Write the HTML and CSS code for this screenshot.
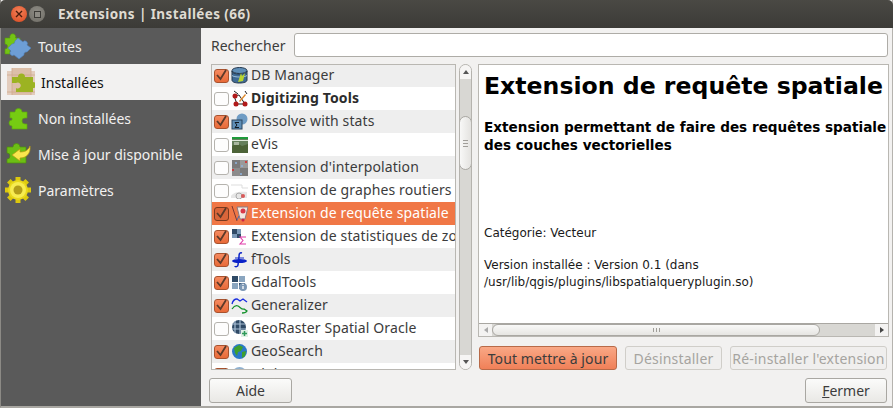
FILE: index.html
```html
<!DOCTYPE html>
<html lang="fr">
<head>
<meta charset="utf-8">
<title>Extensions | Installées (66)</title>
<link rel="stylesheet" href="styles.css">
</head>
<body>
<div class="window">
  <header class="titlebar">
    <span class="wbtn close"><svg viewBox="0 0 8 8" width="8" height="8"><path d="M1 1l6 6M7 1l-6 6" stroke="#4a1c0c" stroke-width="1.4"/></svg></span>
    <span class="wbtn mini"><span class="square"></span></span>
    <span class="wtitle">Extensions | Installées (66)</span>
  </header>
  <div class="body">
    <nav class="sidebar">
      <div class="navitem">
        <svg class="navicon" viewBox="0 0 28 28"><path d="M1 6h5a3 3 0 1 1 5.500 0H16v8H6v8H1v-5a2.500 2.500 0 0 0 0-5z" fill="#74c414" stroke="#559a0c" stroke-width=".6"/><path d="M14 6l5 4a2.500 2.500 0 0 1 4 3l4 3-4 4a2.500 2.500 0 0 0-3 3l-5 4-5-4a2.500 2.500 0 0 1-3-4l-3-3 4-4a3 3 0 0 0 3-3z" fill="#6d9ed6" stroke="#4f80b8" stroke-width=".6"/></svg>
        <span>Toutes</span>
      </div>
      <div class="navitem current">
        <svg class="navicon" viewBox="0 0 28 28"><rect x="0" y="3" width="28" height="24" fill="#e3cdbd"/><rect x="5" y="0" width="19" height="27" fill="#dcbfa9"/><path d="M5 0v27M24 0v27M0 7h28M0 24h28" stroke="#cfa98e" stroke-width=".8" fill="none"/><path d="M5 9h6a3.500 3.500 0 1 1 7 0h8v5a3 3 0 1 1 0 6v4H9v-4a3 3 0 1 0 0-5H5z" fill="#9cb322"/></svg>
        <span>Installées</span>
      </div>
      <div class="navitem">
        <svg class="navicon" viewBox="0 0 28 28"><path d="M6 8h5a3.500 3.500 0 1 1 7 0h5v6h-2a3 3 0 1 0 0 6h2v5H8v-3a3 3 0 1 1 0-6V14H6z" fill="#76cc12" stroke="#5fa80e" stroke-width=".7"/></svg>
        <span>Non installées</span>
      </div>
      <div class="navitem">
        <svg class="navicon" viewBox="0 0 28 28"><path d="M3 7h6a3.500 3.500 0 1 1 7 0h6v16H3v-4a3 3 0 0 0 0-6z" fill="#6cbe14" stroke="#4e8f0c" stroke-width=".7"/><path d="M8 15l8-6v3c4 0 8-1 10-6 1 8-4 12-10 12v3z" fill="#f9e64e" stroke="#b59a12" stroke-width=".7"/></svg>
        <span>Mise à jour disponible</span>
      </div>
      <div class="navitem">
        <svg class="navicon" viewBox="0 0 28 28"><path d="M14 1v26M1 14h26M4.800 4.800l18.400 18.400M23.200 4.800L4.800 23.200" stroke="#dcc80e" stroke-width="5"/><circle cx="14" cy="14" r="10" fill="#e9d81c"/><circle cx="14" cy="14" r="8" fill="#f7ec50"/><circle cx="14" cy="14" r="4.500" fill="#b39e1a"/></svg>
        <span>Paramètres</span>
      </div>
    </nav>
    <main class="main">
      <div class="searchrow">
        <label class="searchlabel">Rechercher</label>
        <div class="searchinput"></div>
      </div>
      <div class="panes">
        <div class="listcol">
          <div class="listbox">
            <div class="row alt"><span class="cb on"><svg viewBox="0 0 13 13"><path d="M2 6l3.500 4L11 1" class="tick"/></svg></span>
              <svg class="ricon" viewBox="0 0 17 17"><ellipse cx="8.500" cy="3.500" rx="7.500" ry="3" fill="#5f8fb8" stroke="#22364d"/><path d="M1 4v9c0 2 3 3 7.500 3s7.500-1 7.500-3V4c0 2-3 3-7.500 3S1 6 1 4z" fill="#3f6b94" stroke="#22364d"/><path d="M1 8.500c2 2 13 2 15 0" fill="none" stroke="#9fc0dc"/><path d="M7 15l3-9 1 3 3-3-2 8z" fill="#b9d52e"/></svg>
              <span class="rtext">DB Manager</span></div>
            <div class="row"><span class="cb"></span>
              <svg class="ricon" viewBox="0 0 17 17"><path d="M3 6l3 8h8L8 5z" fill="none" stroke="#222"/><circle cx="4" cy="6" r="2.500" fill="#b11a1a"/><circle cx="5" cy="14" r="2.500" fill="#b11a1a"/><circle cx="14" cy="14" r="2.500" fill="#b11a1a"/><path d="M8 11l6-7 1 1-6 7z" fill="#e08a2c"/><path d="M3 1l4 3M14 1l2 3" stroke="#222"/></svg>
              <span class="rtext strong">Digitizing Tools</span></div>
            <div class="row alt"><span class="cb on"><svg viewBox="0 0 13 13"><path d="M2 6l3.500 4L11 1" class="tick"/></svg></span>
              <svg class="ricon" viewBox="0 0 17 17"><circle cx="11" cy="6" r="5.500" fill="#6f9cc4"/><rect x="1" y="7" width="10" height="9" fill="#5f8fb8" stroke="#2c465f"/><path d="M8 9.500H4l2 2.500-2 2.500h4" fill="none" stroke="#101820"/></svg>
              <span class="rtext">Dissolve with stats</span></div>
            <div class="row"><span class="cb"></span>
              <svg class="ricon" viewBox="0 0 17 17"><rect x="1" y="2" width="16" height="15" fill="#65805c"/><rect x="1" y="1" width="16" height="2" fill="#1f9a3a"/><rect x="1" y="4" width="16" height="1" fill="#dfe9dc"/><path d="M1 10l5-3 5 3 6-2v9H1z" fill="#4c6338"/><rect x="3" y="6" width="5" height="3" fill="#a9b8a0"/></svg>
              <span class="rtext">eVis</span></div>
            <div class="row alt"><span class="cb"></span>
              <svg class="ricon" viewBox="0 0 17 17"><rect x="1" y="1" width="16" height="16" fill="#7a7a7a"/><rect x="9" y="1" width="8" height="8" fill="#9a9a9a"/><rect x="1" y="9" width="8" height="8" fill="#8c8c8c"/><circle cx="5" cy="4" r="1" fill="#8fb4e0"/><circle cx="15" cy="3" r="1" fill="#d22"/><circle cx="2" cy="11" r="1" fill="#d22"/><circle cx="11" cy="7" r="1" fill="#8fb4e0"/><circle cx="10" cy="15" r="1" fill="#8fb4e0"/></svg>
              <span class="rtext">Extension d'interpolation</span></div>
            <div class="row"><span class="cb"></span>
              <svg class="ricon" viewBox="0 0 17 17"><path d="M0 3h11M11 3v3h6" fill="none" stroke="#ddd"/><path d="M0 14c2-4 9-5 16-4v6H0z" fill="#e6e6e6"/><circle cx="8" cy="14" r="3" fill="none" stroke="#aaa"/><circle cx="12" cy="14" r="2" fill="#d85a5a"/></svg>
              <span class="rtext">Extension de graphes routiers</span></div>
            <div class="row sel"><span class="cb on dark"><svg viewBox="0 0 13 13"><path d="M2 6l3.500 4L11 1" class="tick"/></svg></span>
              <svg class="ricon" viewBox="0 0 17 17"><path d="M1 1l5 15" fill="none" stroke="#7a3a34"/><path d="M6 2h11l-3 12H9z" fill="#f4e6e0" stroke="#8a7a80"/><circle cx="12" cy="6" r="2.500" fill="#d8384a"/><path d="M6 15l2-4" stroke="#4a6ab0"/><circle cx="12" cy="15" r="1.500" fill="#c24"/></svg>
              <span class="rtext">Extension de requête spatiale</span></div>
            <div class="row"><span class="cb on"><svg viewBox="0 0 13 13"><path d="M2 6l3.500 4L11 1" class="tick"/></svg></span>
              <svg class="ricon" viewBox="0 0 17 17"><rect x="1" y="1" width="5" height="5" fill="#2f4a66"/><rect x="6" y="1" width="4" height="5" fill="#7b99b8"/><rect x="1" y="6" width="5" height="4" fill="#7b99b8"/><rect x="6" y="6" width="4" height="4" fill="#2f4a66"/><path d="M15 9H9l3 3.500L9 16h6" fill="none" stroke="#e03aa8" stroke-width="1.100"/></svg>
              <span class="rtext">Extension de statistiques de zone</span></div>
            <div class="row alt"><span class="cb on"><svg viewBox="0 0 13 13"><path d="M2 6l3.500 4L11 1" class="tick"/></svg></span>
              <svg class="ricon" viewBox="0 0 17 17"><path d="M11 2c-3-1-3 2-3 4l-1 8c0 2-3 2-3 1" fill="none" stroke="#0a22c8" stroke-width="1.500"/><ellipse cx="8.500" cy="10" rx="7.500" ry="2" fill="#0a22c8"/><path d="M4 7h9" stroke="#0a22c8"/></svg>
              <span class="rtext">fTools</span></div>
            <div class="row"><span class="cb on"><svg viewBox="0 0 13 13"><path d="M2 6l3.500 4L11 1" class="tick"/></svg></span>
              <svg class="ricon" viewBox="0 0 17 17"><rect x="1" y="2" width="6" height="6" fill="#2f4a66"/><rect x="8" y="2" width="6" height="6" fill="#8aa5bf"/><rect x="1" y="9" width="6" height="6" fill="#8aa5bf"/><rect x="8" y="9" width="6" height="6" fill="#2f4a66"/><circle cx="12" cy="13" r="4" fill="#7c97b4"/><path d="M12 12v3M12 10v1" stroke="#fff" stroke-width="1.300"/></svg>
              <span class="rtext">GdalTools</span></div>
            <div class="row alt"><span class="cb on"><svg viewBox="0 0 13 13"><path d="M2 6l3.500 4L11 1" class="tick"/></svg></span>
              <svg class="ricon" viewBox="0 0 17 17"><path d="M1 7c1-4 3-5 5-5l3 2 3-2 4 3" fill="none" stroke="#1a2ee0" stroke-width="1.300"/><path d="M1 12c2-3 4-4 6-3s4 4 6 3l3 2c-1 2-3 2-5 2" fill="none" stroke="#14922c" stroke-width="1.300"/></svg>
              <span class="rtext">Generalizer</span></div>
            <div class="row"><span class="cb"></span>
              <svg class="ricon" viewBox="0 0 17 17"><circle cx="8" cy="7" r="7" fill="#2f4a66"/><path d="M4 1v12M9 0v14M1 4h13M1 9h14" stroke="#a8bed4" stroke-width="1.200"/><rect x="10" y="10" width="7" height="7" fill="#dff0e4"/><path d="M13.500 11v5M11 13.500h5" stroke="#2f9a5a" stroke-width="1.500"/></svg>
              <span class="rtext">GeoRaster Spatial Oracle</span></div>
            <div class="row alt"><span class="cb on"><svg viewBox="0 0 13 13"><path d="M2 6l3.500 4L11 1" class="tick"/></svg></span>
              <svg class="ricon" viewBox="0 0 17 17"><circle cx="8.500" cy="8.500" r="7.500" fill="#2a78c8"/><path d="M3 5l5-3 4 2-2 4-3 1-1 4-2-3zM11 9l4-1-1 5-3 2z" fill="#3fa02c"/></svg>
              <span class="rtext">GeoSearch</span></div>
            <div class="row"><span class="cb on"><svg viewBox="0 0 13 13"><path d="M2 6l3.500 4L11 1" class="tick"/></svg></span>
              <svg class="ricon" viewBox="0 0 17 17"><circle cx="8.500" cy="8.500" r="7.500" fill="#8fb0cf"/></svg>
              <span class="rtext">Globe</span></div>
          </div>
          <div class="grip vgrip"></div>
          <div class="vscroll">
            <span class="arrow up"></span>
            <div class="vtrack"><div class="vthumb"><i></i><i></i><i></i></div></div>
            <span class="arrow down"></span>
          </div>
        </div>
        <div class="grip vgrip2"></div>
        <div class="detailcol">
          <div class="detail">
            <div class="doc">
              <h1 class="dtitle">Extension de requête spatiale</h1>
              <h3 class="dsub">Extension permettant de faire des requêtes spatiale<br>des couches vectorielles</h3>
              <p class="dcat">Catégorie: Vecteur</p>
              <p class="dver">Version installée : Version 0.1 (dans<br>/usr/lib/qgis/plugins/libspatialqueryplugin.so)</p>
            </div>
            <div class="hscroll">
              <span class="harrow left"></span>
              <div class="htrack"><div class="hthumb"><i></i><i></i><i></i></div></div>
              <span class="harrow right"></span>
            </div>
          </div>
          <div class="actions">
            <button class="btn accent">Tout mettre à jour</button>
            <button class="btn off uninstall">Désinstaller</button>
            <button class="btn off reinstall">Ré-installer l'extension</button>
          </div>
        </div>
      </div>
      <div class="footer">
        <button class="btn foot">Aide</button>
        <button class="btn foot close-btn"><span><u>F</u>ermer</span></button>
      </div>
    </main>
  </div>
</div>
</body>
</html>
```
FILE: styles.css
```css
* { box-sizing: border-box; }
html, body { margin: 0; padding: 0; }
body { width: 893px; height: 408px; overflow: hidden; background: #f2f1f0; font-family: "Noto Sans", sans-serif; font-size: 14px; color: #3c3c3c; }
.window { width: 893px; height: 408px; display: flex; flex-direction: column; border-left: 1px solid #8c8a85; border-right: 1px solid #b5b3ae; border-bottom: 2px solid #a9a7a2; }
.titlebar { height: 28px; margin-left: -1px; margin-right: -1px; flex: none; display: flex; align-items: center; background: linear-gradient(#4a4944, #3c3b37); border-radius: 5px 5px 0 0; padding-left: 11px; }
.wbtn { width: 16px; height: 16px; border-radius: 50%; display: flex; align-items: center; justify-content: center; }
.close { background: radial-gradient(circle at 50% 35%, #f4825a, #d9481f); }
.mini { background: radial-gradient(circle at 50% 35%, #8d8b84, #6f6d66); margin-left: 2px; }
.square { width: 7px; height: 7px; border: 1px solid #3c3b37; background: #8d8b84; }
.wtitle { margin-left: 13px; color: #dfdbd2; font-weight: 700; font-size: 13.500px; letter-spacing: 0.41px; white-space: nowrap; }
.body { flex: 1; display: flex; min-height: 0; }
.sidebar { width: 200px; flex: none; background: #5a5a5a; display: flex; flex-direction: column; }
.navitem { height: 36px; flex: none; display: flex; align-items: center; gap: 6px; padding-left: 3px; color: #f2f1f0; font-size: 14px; white-space: nowrap; }
.navitem.current { background: #f2f1f0; color: #101010; padding-left: 6px; }
.navicon { width: 28px; height: 28px; flex: none; }
.main { flex: 1; min-width: 0; display: flex; flex-direction: column; padding: 5px 4px 3px 8px; }
.searchrow { display: flex; align-items: center; height: 24px; flex: none; padding-left: 2px; }
.searchlabel { width: 83px; flex: none; font-size: 14px; white-space: nowrap; }
.searchinput { width: 594px; height: 24px; background: #fff; border: 1px solid #aeaca7; border-radius: 3px; }
.panes { display: flex; margin-top: 7px; height: 306px; flex: none; padding-left: 2px; }
.listcol { display: flex; width: 261px; flex: none; }
.listbox { width: 245px; height: 306px; flex: none; border: 1px solid #b9b7b2; background: #fff; overflow: hidden; }
.row { height: 23px; display: flex; align-items: center; padding-left: 2px; white-space: nowrap; font-size: 14px; letter-spacing: 0.12px; overflow: hidden; color: #3c3c3c; }
.row:first-child { margin-top: -1px; }
.row.alt { background: #eeeeee; }
.row.sel { background: #f07746; color: #fff; }
.cb { width: 15px; height: 14px; flex: none; border: 1px solid #b5b3ae; border-radius: 3px; background: #fdfdfd; display: flex; align-items: center; justify-content: center; }
.cb svg { width: 13px; height: 13px; overflow: visible; }
.cb.on { background: linear-gradient(#f58a60, #e86a38); border-color: #a8522e; }
.cb.on.dark { background: #d9653a; border-color: #7a3a20; }
.tick { fill: none; stroke: #5c3a2a; stroke-width: 1.800; }
.ricon { width: 17px; height: 17px; flex: none; margin-left: 2px; }
.rtext { margin-left: 3px; padding-bottom: 2px; }
.strong { font-weight: 700; color: #2c2c2c; }
.grip { flex: none; }
.vgrip { width: 3px; }
.vscroll { width: 13px; height: 306px; flex: none; border: 1px solid #b5b3ae; border-radius: 7px; background: #e4e3e0; display: flex; flex-direction: column; overflow: hidden; }
.arrow { height: 14px; flex: none; background: #f6f5f4; display: flex; align-items: center; justify-content: center; }
.arrow::before { content: ""; border-left: 3px solid transparent; border-right: 3px solid transparent; }
.arrow.up::before { border-bottom: 4px solid #555; }
.arrow.down::before { border-top: 4px solid #555; }
.vtrack { flex: 1; padding-top: 37px; background: #d8d7d3; }
.vthumb { height: 54px; margin: 0 -1px; border: 1px solid #a9a7a2; border-radius: 7px; background: linear-gradient(90deg, #f8f8f7, #e4e3e0); display: flex; flex-direction: column; align-items: center; justify-content: center; gap: 2px; }
.vthumb i { width: 5px; height: 1px; background: #a09e99; }
.vgrip2 { width: 6px; }
.detailcol { width: 411px; flex: none; display: flex; flex-direction: column; }
.detail { height: 273px; flex: none; border: 1px solid #b9b7b2; background: #fff; display: flex; flex-direction: column; overflow: hidden; }
.doc { flex: 1; min-height: 0; padding: 7px 0 0 5px; font-family: "DejaVu Sans", sans-serif; color: #000; white-space: nowrap; overflow: hidden; }
.dtitle { margin: 0; font-size: 23.600px; line-height: 28px; font-weight: 700; }
.dsub { margin: 18px 0 0; font-size: 13.600px; line-height: 18px; font-weight: 700; }
.dcat { margin: 71px 0 0; font-size: 12px; line-height: 16px; color: #1a1a1a; }
.dver { margin: 16px 0 0; font-size: 12px; line-height: 17px; color: #1a1a1a; }
.hscroll { height: 13px; flex: none; display: flex; border-top: 1px solid #a9a7a2; background: #e4e3e0; }
.harrow { width: 13px; flex: none; background: #f4f3f2; display: flex; align-items: center; justify-content: center; }
.harrow::before { content: ""; border-top: 3px solid transparent; border-bottom: 3px solid transparent; }
.harrow.left::before { border-right: 4px solid #aaa; }
.harrow.right::before { border-left: 4px solid #444; }
.htrack { flex: 1; background: #d8d7d3; }
.hthumb { width: 328px; height: 100%; border: 1px solid #a9a7a2; border-radius: 7px; background: linear-gradient(#f9f9f8, #e6e5e2); display: flex; align-items: center; justify-content: center; gap: 2px; }
.hthumb i { width: 1px; height: 4px; background: #a09e99; }
.actions { display: flex; margin-top: 9px; height: 24px; flex: none; padding-left: 1px; }
.btn { font-family: "Noto Sans", sans-serif; font-size: 14px; padding: 0; height: 24px; border: 1px solid #a9a7a2; border-radius: 3px; background: linear-gradient(#fbfbfa, #e9e8e5); color: #3c3c3c; white-space: nowrap; overflow: hidden; }
.btn.accent { width: 138px; background: linear-gradient(#f9a886, #f08058); border-color: #b86a48; color: #3c3c3c; letter-spacing: 0.1px; }
.btn.off { background: #f0efee; border-color: #d0cec9; color: #a6a4a0; letter-spacing: 0.2px; }
.uninstall { width: 97px; margin-left: 8px; }
.reinstall { width: 157px; margin-left: 8px; }
.footer { display: flex; justify-content: space-between; margin-top: 8px; height: 25px; flex: none; padding-right: 1px; }
.btn.foot { width: 83px; height: 25px; }
.btn.close-btn { width: 82px; }
```
